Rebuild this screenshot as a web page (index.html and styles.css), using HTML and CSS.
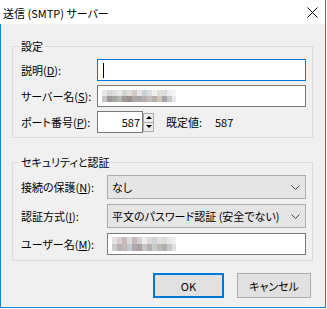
FILE: index.html
```html
<!DOCTYPE html>
<html lang="ja">
<head>
    <meta charset="UTF-8">
    <title>送信 (SMTP) サーバー</title>
    <link rel="stylesheet" href="styles.css">
</head>
<body>
    <div class="window">
        <div class="titlebar">
            <span class="title">送信 (SMTP) サーバー</span>
            <svg class="close" width="11" height="11" viewBox="0 0 11 11">
                <path d="M0.5 0.5 L10.5 10.5 M10.5 0.5 L0.5 10.5" stroke="#000" stroke-width="1" fill="none"/>
            </svg>
        </div>

        <div class="client">
            <fieldset class="group group-settings">
                <legend>設定</legend>
                <div class="rows">
                    <label>説明(<u>D</u>):</label>
                    <div class="edit focused"><span class="caret"></span></div>

                    <label>サーバー名(<u>S</u>):</label>
                    <div class="edit">
                        <div class="mosaic mosaic-server">
                            <div class="m-row m-row1"></div>
                            <div class="m-row m-row2"></div>
                        </div>
                    </div>

                    <label>ポート番号(<u>P</u>):</label>
                    <div class="port">
                        <div class="edit port-edit">587</div>
                        <div class="spin">
                            <div class="spin-btn"><span class="tri tri-up"></span></div>
                            <div class="spin-btn"><span class="tri tri-down"></span></div>
                        </div>
                        <span class="default-label">既定値:</span>
                        <span class="default-value">587</span>
                    </div>
                </div>
            </fieldset>

            <fieldset class="group group-security">
                <legend>セキュリティと認証</legend>
                <div class="rows">
                    <label>接続の保護(<u>N</u>):</label>
                    <div class="combo">
                        <span>なし</span>
                        <svg class="chevron" width="9" height="5" viewBox="0 0 9 5">
                            <polyline points="0.5,0.5 4.5,4.5 8.5,0.5" stroke="#444" stroke-width="1" fill="none"/>
                        </svg>
                    </div>

                    <label>認証方式(<u>I</u>):</label>
                    <div class="combo">
                        <span>平文のパスワード認証 (安全でない)</span>
                        <svg class="chevron" width="9" height="5" viewBox="0 0 9 5">
                            <polyline points="0.5,0.5 4.5,4.5 8.5,0.5" stroke="#444" stroke-width="1" fill="none"/>
                        </svg>
                    </div>

                    <label>ユーザー名(<u>M</u>):</label>
                    <div class="edit">
                        <div class="mosaic mosaic-user">
                            <div class="m-row m-row1"></div>
                            <div class="m-row m-row2"></div>
                        </div>
                    </div>
                </div>
            </fieldset>

            <div class="buttons">
                <button class="btn btn-ok">OK</button>
                <button class="btn btn-cancel">キャンセル</button>
            </div>
        </div>
    </div>
</body>
</html>
```

FILE: styles.css
```css
body {
    margin: 0;
    background-color: #ffffff;
    font-family: "Noto Sans CJK JP", sans-serif;
    font-size: 11px;
    color: #000000;
    font-feature-settings: "palt";
    white-space: nowrap;
}

.window {
    width: 325px;
    border-right: 1px solid #1883d7;
}

.titlebar {
    height: 24px;
    background-color: #ffffff;
    display: flex;
    align-items: center;
    justify-content: space-between;
    padding: 1px 7px 0 3px;
    box-sizing: border-box;
}

.close {
    display: block;
}

.client {
    height: 283px;
    background-color: #f0f0f0;
    border-left: 1px solid #1883d7;
    border-bottom: 1px solid #1883d7;
    overflow: hidden;
}

/* group boxes */
.group {
    margin: 14px 12px 0 11px;
    padding: 5px 6px 4px 8px;
    border: 1px solid #dcdcdc;
    min-width: 0;
}

.group legend {
    padding: 0 2px;
    margin-left: -2px;
    line-height: 16px;
}

.group-security {
    margin-top: 16px;
    padding-bottom: 5px;
}

.rows {
    display: grid;
    align-items: center;
}

.group-settings .rows {
    grid-template-columns: 76px 209px;
    grid-template-rows: 22px 22px 22px;
    row-gap: 4px;
}

.group-security .rows {
    grid-template-columns: 86px 199px;
    grid-template-rows: 24px 24px 22px;
    row-gap: 5px;
}

label {
    line-height: 16px;
}

/* edit boxes */
.edit {
    height: 22px;
    box-sizing: border-box;
    border: 1px solid #7a7a7a;
    background-color: #ffffff;
    display: flex;
    align-items: center;
}

.edit.focused {
    border-color: #0078d7;
}

.caret {
    width: 1px;
    height: 15px;
    margin-left: 5px;
    background-color: #000000;
}

.port {
    display: flex;
    align-items: center;
    height: 22px;
}

.port-edit {
    width: 46px;
    justify-content: flex-end;
    padding-right: 2px;
}

.spin {
    width: 11px;
    display: flex;
    flex-direction: column;
}

.spin-btn {
    height: 10px;
    box-sizing: border-box;
    border: 1px solid #acacac;
    background-color: #ececec;
    display: flex;
    align-items: center;
    justify-content: center;
}

.spin-btn + .spin-btn {
    margin-top: -1px;
}

.tri {
    width: 0;
    height: 0;
    border-left: 3px solid transparent;
    border-right: 3px solid transparent;
}

.tri-up {
    border-bottom: 3px solid #000000;
}

.tri-down {
    border-top: 3px solid #000000;
}

.default-label {
    width: 49px;
    margin-left: 12px;
}

/* combo boxes */
.combo {
    height: 24px;
    box-sizing: border-box;
    border: 1px solid #adadad;
    background-color: #e5e5e5;
    display: flex;
    align-items: center;
    justify-content: space-between;
    padding: 0 5px 0 4px;
}

.chevron {
    display: block;
}

/* blurred values */
.mosaic {
    display: flex;
    flex-direction: column;
}

.mosaic-server {
    margin-left: 4px;
}

.mosaic-server .m-row {
    width: 74px;
    height: 6px;
}

.mosaic-server .m-row1 {
    background: linear-gradient(90deg,
        #e6e6e6 0 5px, #d6d6d6 5px 10px, #dcdcdc 10px 15px, #e8e8e8 15px 20px,
        #cbd6cd 20px 25px, #e2dede 25px 30px, #d8c8c2 30px 35px, #e6e6e6 35px 40px,
        #c8d2dc 40px 45px, #dedede 45px 50px, #f0f0f0 50px 55px, #e4e0d8 55px 60px,
        #dcdcdc 60px 65px, #eceeee 65px 70px, #f4f4f4 70px 74px);
}

.mosaic-server .m-row2 {
    background: linear-gradient(90deg,
        #c8c4c8 0 5px, #9c9898 5px 10px, #a8a4a4 10px 15px, #b4b4b0 15px 20px,
        #a09898 20px 25px, #9a908c 25px 30px, #b0a8a4 30px 35px, #a8a4a8 35px 40px,
        #b8b0ac 40px 45px, #c0c0bc 45px 50px, #b8b0a8 50px 55px, #cfc8b8 55px 60px,
        #a8a4ac 60px 65px, #c8c8cc 65px 70px, #e8e8e8 70px 74px);
}

.mosaic-user {
    margin-left: 4px;
}

.mosaic-user .m-row {
    width: 64px;
    height: 7px;
}

.mosaic-user .m-row1 {
    background: linear-gradient(90deg,
        #e4e0e4 0 5px, #d8d0d4 5px 10px, #cbb8b8 10px 15px, #dcdcdc 15px 20px,
        #c8b8bc 20px 25px, #d4d0d4 25px 30px, #ecebec 30px 35px, #dcd8dc 35px 40px,
        #d0d4d4 40px 45px, #e0e0e0 45px 50px, #dcdcdc 50px 55px, #e8e8e8 55px 60px,
        #f0f0f0 60px 64px);
}

.mosaic-user .m-row2 {
    background: linear-gradient(90deg,
        #cccccc 0 5px, #b8b0b4 5px 10px, #c4b8b8 10px 15px, #c0c8d0 15px 20px,
        #b0a8b0 20px 25px, #a8a0a4 25px 30px, #c8c4c8 30px 35px, #b4b0b4 35px 40px,
        #c8ccc8 40px 45px, #bcb8b4 45px 50px, #b0b0ac 50px 55px, #c8c8c8 55px 60px,
        #e0e0e4 60px 64px);
}

/* dialog buttons */
.buttons {
    display: flex;
    justify-content: flex-end;
    gap: 13px;
    margin: 12px 14px 0 0;
}

.btn {
    height: 25px;
    box-sizing: border-box;
    border: 1px solid #adadad;
    background-color: #e1e1e1;
    font: inherit;
    color: #000000;
    padding: 0;
}

.btn-ok {
    width: 71px;
    border: 2px solid #0078d7;
}

.btn-cancel {
    width: 74px;
}
```
